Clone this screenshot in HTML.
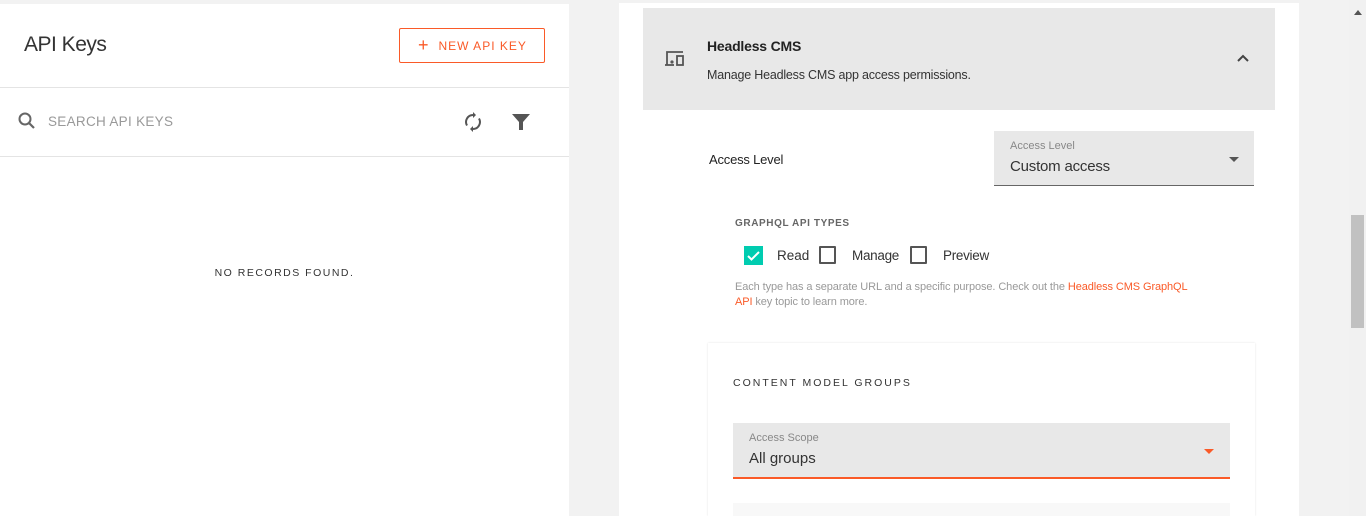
<!DOCTYPE html>
<html><head><style>
*{box-sizing:border-box;margin:0;padding:0}
html,body{width:1366px;height:516px;overflow:hidden}
body{background:#f2f2f2;font-family:"Liberation Sans",sans-serif;position:relative;color:#333}
.abs{position:absolute}
</style></head><body>
<div class="abs" style="left:0;top:4px;width:569px;height:512px;background:#fff">
  <div class="abs" style="left:24px;top:29px;font-size:21px;color:#333;letter-spacing:-0.5px">API Keys</div>
  <div class="abs" style="left:399px;top:24px;width:146px;height:35px;border:1px solid #fa5a28;border-radius:2px;color:#fa5a28;font-size:12px;letter-spacing:1px;line-height:33px;padding-left:18px;white-space:nowrap"><span style="font-size:18px;vertical-align:-1px;margin-right:9px">+</span>NEW API KEY</div>
  <div class="abs" style="left:0;top:83px;width:569px;height:1px;background:#e4e4e4"></div>
  <svg class="abs" style="left:17px;top:107px" width="20" height="20" viewBox="0 0 20 20"><circle cx="8" cy="8" r="5.5" fill="none" stroke="#666" stroke-width="2"/><path d="M12 12l5 5" stroke="#666" stroke-width="2.2"/></svg>
  <div class="abs" style="left:48px;top:110px;font-size:13.5px;color:#999;letter-spacing:0.3px">SEARCH API KEYS</div>
  <svg class="abs" style="left:463px;top:108px" width="20" height="20" viewBox="0 0 20 20"><path d="M10 3a7 7 0 0 0-6 10.5M10 17a7 7 0 0 0 6-10.5" fill="none" stroke="#555" stroke-width="2"/><path d="M10 0v6l3-3zM10 20v-6l-3 3z" fill="#555"/></svg>
  <svg class="abs" style="left:511px;top:108px" width="20" height="20" viewBox="0 0 20 20"><path d="M1 2h18l-7 8v8h-4v-8z" fill="#555"/></svg>
  <div class="abs" style="left:0;top:152px;width:569px;height:1px;background:#e4e4e4"></div>
  <div class="abs" style="left:0;top:263px;width:569px;text-align:center;font-size:10.5px;letter-spacing:1.5px;color:#333">NO RECORDS FOUND.</div>
</div>
<div class="abs" style="left:619px;top:3px;width:680px;height:513px;background:#fff"></div>
<div class="abs" style="left:643px;top:8px;width:632px;height:102px;background:#e8e8e8">
  <svg class="abs" style="left:21px;top:42px" width="22" height="18" viewBox="0 0 22 18"><path d="M3 15V2h16" fill="none" stroke="#555" stroke-width="1.8"/><path d="M1 15h9" stroke="#555" stroke-width="1.8"/><rect x="13" y="6" width="6" height="9" fill="none" stroke="#555" stroke-width="1.8"/><circle cx="8" cy="12" r="1.6" fill="#555"/></svg>
  <div class="abs" style="left:64px;top:30px;font-size:14px;font-weight:bold;color:#222;letter-spacing:-0.2px">Headless CMS</div>
  <div class="abs" style="left:64px;top:60px;font-size:12.5px;color:#333;letter-spacing:-0.2px">Manage Headless CMS app access permissions.</div>
  <svg class="abs" style="left:593px;top:45px" width="14" height="10" viewBox="0 0 14 10"><path d="M2 8l5-5 5 5" fill="none" stroke="#444" stroke-width="2"/></svg>
</div>
<div class="abs" style="left:709px;top:152px;font-size:13px;color:#222;letter-spacing:-0.2px">Access Level</div>
<div class="abs" style="left:994px;top:131px;width:260px;height:55px;background:#e8e8e8;border-bottom:1px solid #666">
  <div class="abs" style="left:16px;top:9px;font-size:11px;color:#888">Access Level</div>
  <div class="abs" style="left:16px;top:27px;font-size:15px;color:#333;letter-spacing:-0.2px">Custom access</div>
  <div class="abs" style="left:235px;top:26px;width:0;height:0;border-left:5px solid transparent;border-right:5px solid transparent;border-top:5px solid #555"></div>
</div>
<div class="abs" style="left:735px;top:218px;font-size:10px;font-weight:bold;color:#666;letter-spacing:0.6px">GRAPHQL API TYPES</div>
<div class="abs" style="left:744px;top:246px;width:19px;height:19px;background:#00ccb0"><svg width="19" height="19" viewBox="0 0 19 19"><path d="M4 10l3.5 3.5L15 6" fill="none" stroke="#fff" stroke-width="2"/></svg></div>
<div class="abs" style="left:777px;top:248px;font-size:13.5px;color:#333">Read</div>
<div class="abs" style="left:819px;top:246px;width:17px;height:18px;border:2px solid #555;border-radius:1px"></div>
<div class="abs" style="left:852px;top:248px;font-size:13.5px;color:#333;letter-spacing:-0.3px">Manage</div>
<div class="abs" style="left:910px;top:246px;width:17px;height:18px;border:2px solid #555;border-radius:1px"></div>
<div class="abs" style="left:943px;top:248px;font-size:13.5px;color:#333;letter-spacing:-0.3px">Preview</div>
<div class="abs" style="left:735px;top:280px;width:500px;font-size:11px;line-height:15px;color:#999;letter-spacing:-0.1px">Each type has a separate URL and a specific purpose. Check out the <span style="color:#fa5a28">Headless CMS GraphQL</span><br><span style="color:#fa5a28">API</span> key topic to learn more.</div>
<div class="abs" style="left:708px;top:343px;width:547px;height:173px;background:#fff;box-shadow:0 0 2px rgba(0,0,0,0.12)">
  <div class="abs" style="left:25px;top:34px;font-size:10.5px;letter-spacing:2px;color:#333">CONTENT MODEL GROUPS</div>
  <div class="abs" style="left:25px;top:80px;width:497px;height:56px;background:#e8e8e8;border-bottom:2px solid #fa5a28">
    <div class="abs" style="left:16px;top:9px;font-size:11px;color:#888">Access Scope</div>
    <div class="abs" style="left:16px;top:27px;font-size:15px;color:#333">All groups</div>
    <div class="abs" style="left:471px;top:26px;width:0;height:0;border-left:5px solid transparent;border-right:5px solid transparent;border-top:5px solid #fa5a28"></div>
  </div>
  <div class="abs" style="left:25px;top:160px;width:497px;height:13px;background:#f8f8f8"></div>
</div>
<div class="abs" style="left:1349px;top:0;width:17px;height:516px;background:#f1f1f1"></div>
<div class="abs" style="left:1354px;top:10px;width:0;height:0;border-left:4px solid transparent;border-right:4px solid transparent;border-bottom:5px solid #555"></div>
<div class="abs" style="left:1351px;top:215px;width:13px;height:113px;background:#c1c1c1"></div>
</body></html>
